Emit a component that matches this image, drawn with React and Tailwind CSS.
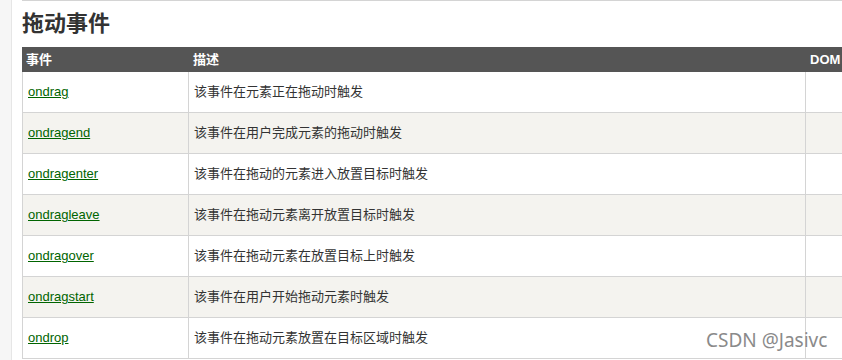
const rows = [
  ['ondrag', '该事件在元素正在拖动时触发'],
  ['ondragend', '该事件在用户完成元素的拖动时触发'],
  ['ondragenter', '该事件在拖动的元素进入放置目标时触发'],
  ['ondragleave', '该事件在拖动元素离开放置目标时触发'],
  ['ondragover', '该事件在拖动元素在放置目标上时触发'],
  ['ondragstart', '该事件在用户开始拖动元素时触发'],
  ['ondrop', '该事件在拖动元素放置在目标区域时触发'],
];

export default function App() {
  return (
    <div
      className="relative flex h-[360px] w-[842px] overflow-hidden bg-white text-[#333]"
      style={{ fontFamily: '"Liberation Sans", "Noto Sans CJK SC", sans-serif' }}
    >
      <div className="w-[12px] shrink-0 border-r border-[#e6e6e6] bg-[#f6f6f6]" />
      <div className="ml-[10px] flex-1 border-t border-[#d4d4d4]">
        <h2 className="flex h-[46px] items-center text-[22px] font-bold leading-none text-[#333]">拖动事件</h2>
        <div className="w-[900px]">
          <div className="flex h-[25px] items-center bg-[#555555] text-[13px] font-bold text-white">
            <div className="w-[167px] pl-[4px]">事件</div>
            <div className="w-[617px] pl-[4px]">描述</div>
            <div className="pl-[4px]">DOM</div>
          </div>
          {rows.map(([name, desc], i) => (
            <div
              key={name}
              className={
                'flex h-[41px] border-b border-l border-[#d4d4d4] text-[13px] ' +
                (i % 2 === 1 ? 'bg-[#f4f3ef]' : 'bg-white')
              }
            >
              <div className="flex w-[166px] items-center border-r border-[#d4d4d4] pl-[5px]">
                <a href="#" className="text-[#006400] underline">{name}</a>
              </div>
              <div className="flex w-[617px] items-center border-r border-[#d4d4d4] pl-[5px]">{desc}</div>
              <div className="flex-1" />
            </div>
          ))}
        </div>
      </div>
      <div
        className="absolute left-[706px] top-[326px] text-[19px] text-[#8a8a8a]"
        style={{ fontFamily: '"Noto Sans", sans-serif', textShadow: '0 0 2px #fff' }}
      >
        CSDN @Jasivc
      </div>
    </div>
  );
}
